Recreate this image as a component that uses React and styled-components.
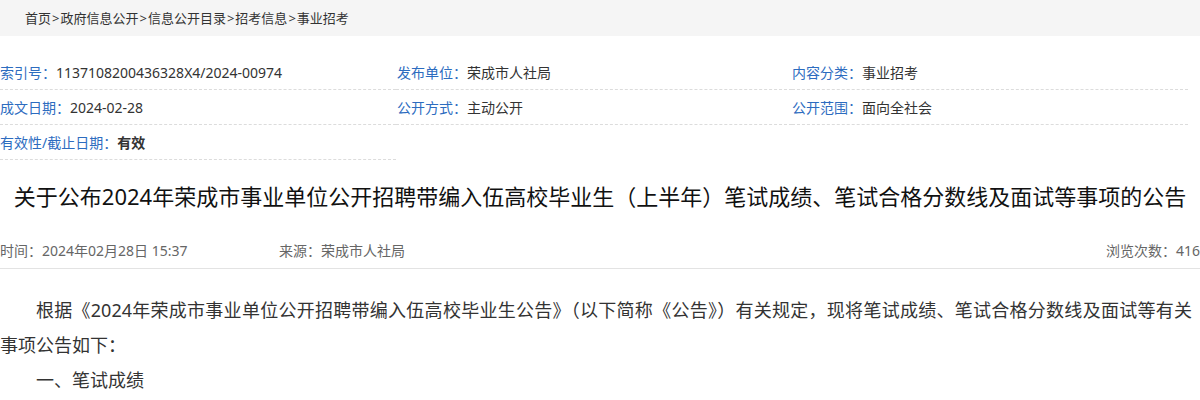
import styled, { createGlobalStyle } from 'styled-components';

const GlobalStyle = createGlobalStyle`
  body {
    margin: 0;
    background: #fff;
    font-family: "Noto Sans", "Noto Sans CJK SC", sans-serif;
    color: #333;
  }
`;

const Page = styled.div`
  width: 1200px;
  overflow: hidden;
`;

const Crumbs = styled.div`
  height: 36px;
  line-height: 36px;
  background: #f5f5f5;
  padding-left: 25px;
  font-size: 13px;
  color: #333;
`;

const Sep = styled.span`
  margin: 0 1px;
`;

const MetaGrid = styled.div`
  display: grid;
  grid-template-columns: repeat(3, 396px);
  margin-top: 19px;
`;

const MetaCell = styled.div`
  height: 34px;
  display: flex;
  align-items: center;
  border-bottom: 1px dashed #dcdcdc;
  font-size: 14px;
  padding-left: ${props => props.$pad || 0}px;
`;

const Label = styled.span`
  color: #2d6cbf;
`;

const Value = styled.span`
  color: #333;
  font-weight: ${props => (props.$bold ? 700 : 400)};
`;

const Title = styled.h1`
  margin: 0;
  padding: 21px 0;
  line-height: 30px;
  font-size: 22px;
  font-weight: 400;
  color: #111;
  text-align: center;
`;

const InfoBar = styled.div`
  height: 36px;
  display: flex;
  align-items: center;
  border-bottom: 1px solid #e3e3e3;
  font-size: 14px;
  color: #666;
`;

const InfoItem = styled.span`
  width: ${props => props.$w || 'auto'};
  margin-left: ${props => (props.$right ? 'auto' : '0')};
`;

const Body = styled.div`
  margin-top: 24px;
  font-size: 18px;
  line-height: 35px;
  color: #333;
`;

const Para = styled.p`
  margin: 0;
  text-indent: 2em;
  text-align: justify;
  padding-right: 8px;
`;

const crumbs = ['首页', '政府信息公开', '信息公开目录', '招考信息', '事业招考'];

const meta = [
  { label: '索引号：', value: '1137108200436328X4/2024-00974' },
  { label: '发布单位：', value: '荣成市人社局', pad: 1 },
  { label: '内容分类：', value: '事业招考' },
  { label: '成文日期：', value: '2024-02-28' },
  { label: '公开方式：', value: '主动公开', pad: 1 },
  { label: '公开范围：', value: '面向全社会' },
  { label: '有效性/截止日期：', value: '有效', bold: true },
];

export default function App() {
  return (
    <Page>
      <GlobalStyle />
      <Crumbs>
        {crumbs.map((c, i) => (
          <span key={c}>
            {i > 0 && <Sep>&gt;</Sep>}
            {c}
          </span>
        ))}
      </Crumbs>
      <MetaGrid>
        {meta.map(m => (
          <MetaCell key={m.label} $pad={m.pad}>
            <Label>{m.label}</Label>
            <Value $bold={m.bold}>{m.value}</Value>
          </MetaCell>
        ))}
      </MetaGrid>
      <Title>关于公布2024年荣成市事业单位公开招聘带编入伍高校毕业生（上半年）笔试成绩、笔试合格分数线及面试等事项的公告</Title>
      <InfoBar>
        <InfoItem $w="279px">时间：2024年02月28日 15:37</InfoItem>
        <InfoItem>来源：荣成市人社局</InfoItem>
        <InfoItem $right>浏览次数：416</InfoItem>
      </InfoBar>
      <Body>
        <Para>根据《2024年荣成市事业单位公开招聘带编入伍高校毕业生公告》（以下简称《公告》）有关规定，现将笔试成绩、笔试合格分数线及面试等有关事项公告如下：</Para>
        <Para>一、笔试成绩</Para>
      </Body>
    </Page>
  );
}
